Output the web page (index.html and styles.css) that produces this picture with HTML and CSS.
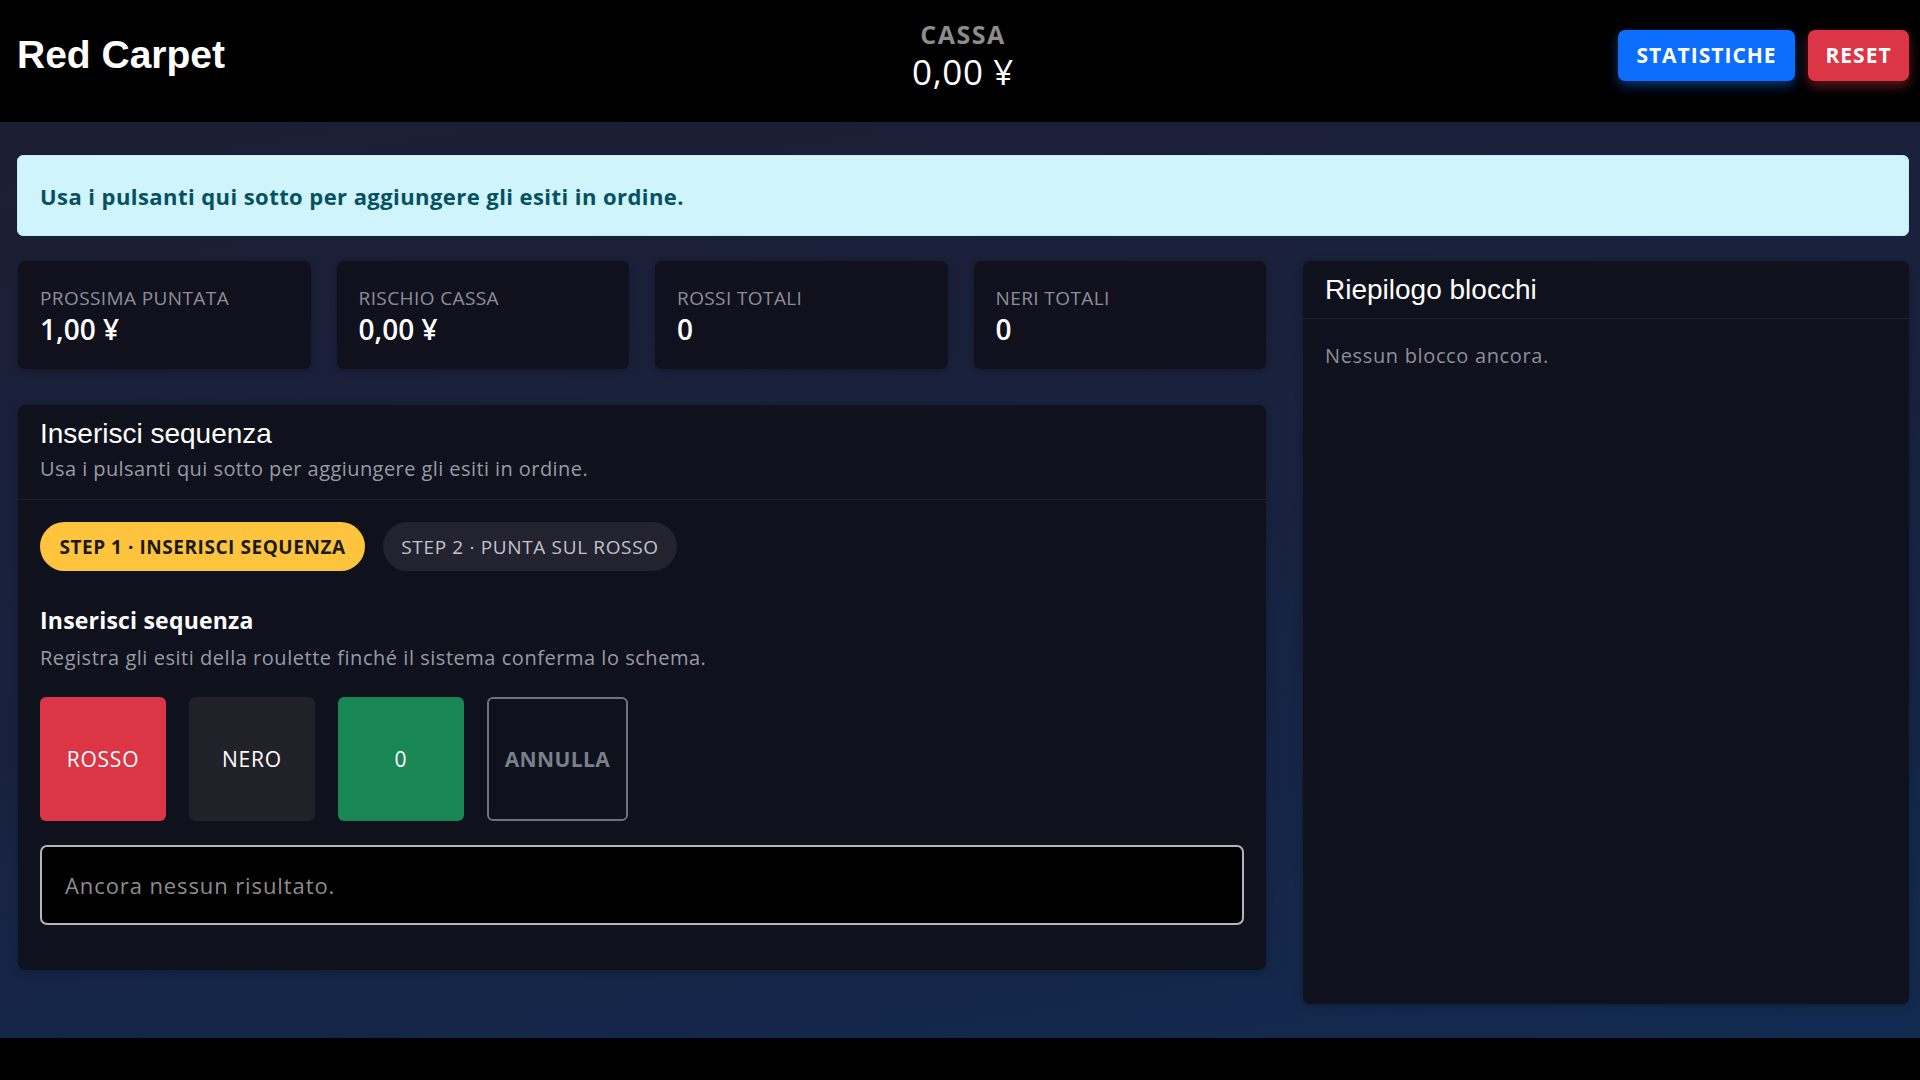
FILE: index.html
```html
<!DOCTYPE html>
<html lang="it">
<head>
<meta charset="utf-8">
<title>Red Carpet</title>
<link rel="stylesheet" href="styles.css">
</head>
<body>
<header class="topbar">
  <div class="brand">Red Carpet</div>
  <div class="cassa">
    <div class="cassa-label">CASSA</div>
    <div class="cassa-value">0,00 ¥</div>
  </div>
  <div class="actions">
    <button class="btn btn-blue">STATISTICHE</button>
    <button class="btn btn-red">RESET</button>
  </div>
</header>
<main class="main">
  <div class="alert">Usa i pulsanti qui sotto per aggiungere gli esiti in ordine.</div>
  <div class="layout">
    <div class="left">
      <div class="stats">
        <div class="stat"><div class="stat-label">PROSSIMA PUNTATA</div><div class="stat-value">1,00 ¥</div></div>
        <div class="stat"><div class="stat-label">RISCHIO CASSA</div><div class="stat-value">0,00 ¥</div></div>
        <div class="stat"><div class="stat-label">ROSSI TOTALI</div><div class="stat-value">0</div></div>
        <div class="stat"><div class="stat-label">NERI TOTALI</div><div class="stat-value">0</div></div>
      </div>
      <section class="panel">
        <div class="panel-head">
          <h2 class="panel-title">Inserisci sequenza</h2>
          <p class="panel-sub">Usa i pulsanti qui sotto per aggiungere gli esiti in ordine.</p>
        </div>
        <div class="panel-body">
          <div class="steps">
            <span class="pill pill-active">STEP 1 · INSERISCI SEQUENZA</span>
            <span class="pill pill-idle">STEP 2 · PUNTA SUL ROSSO</span>
          </div>
          <h3 class="sec-title">Inserisci sequenza</h3>
          <p class="sec-text">Registra gli esiti della roulette finché il sistema conferma lo schema.</p>
          <div class="choices">
            <button class="choice c-red">ROSSO</button>
            <button class="choice c-black">NERO</button>
            <button class="choice c-green">0</button>
            <button class="choice c-undo">ANNULLA</button>
          </div>
          <div class="results">Ancora nessun risultato.</div>
        </div>
      </section>
    </div>
    <aside class="summary">
      <div class="summary-head"><h2 class="panel-title">Riepilogo blocchi</h2></div>
      <div class="summary-body">Nessun blocco ancora.</div>
    </aside>
  </div>
</main>
</body>
</html>
```
FILE: styles.css
```css
* { box-sizing: border-box; }
html, body { margin: 0; padding: 0; }
body {
  background: #000;
  font-family: "Open Sans", "Noto Sans", sans-serif;
  color: #fff;
  width: 1920px;
  height: 1080px;
  overflow: hidden;
}
button { font-family: inherit; border: none; cursor: pointer; }
h2, h3, p { margin: 0; }

.topbar {
  height: 122px;
  background: #000;
  display: grid;
  grid-template-columns: 1fr auto 1fr;
  align-items: center;
  padding: 0 11px 12px 17px;
}
.brand {
  font-family: "Liberation Sans", Arial, sans-serif;
  font-weight: 700;
  font-size: 39px;
  color: #fff;
}
.cassa { text-align: center; padding-top: 2px; }
.cassa-label {
  font-weight: 700;
  font-size: 25px;
  letter-spacing: 1.5px;
  color: #8c8c8c;
  line-height: 28px;
}
.cassa-value {
  margin-top: 4px;
  font-size: 35px;
  letter-spacing: 0.6px;
  line-height: 40px;
  color: #fff;
}
.actions {
  display: flex;
  justify-content: flex-end;
  gap: 13px;
}
.btn {
  height: 51px;
  border-radius: 7px;
  color: #fff;
  font-weight: 700;
  font-size: 21px;
  letter-spacing: 1px;
  padding: 0;
}
.btn-blue { background: #0d6efd; width: 177px; box-shadow: 0 5px 12px rgba(13, 110, 253, 0.45); }
.btn-red { background: #dc3545; width: 101px; box-shadow: 0 5px 12px rgba(220, 53, 69, 0.45); }

.main {
  height: 916px;
  padding: 33px 11px 0 17px;
  background: linear-gradient(170deg, #1c1e33 0%, #182240 50%, #122a50 100%);
}
.alert {
  height: 81px;
  background: #cff4fc;
  border: 1px solid #b6effb;
  border-radius: 6px;
  color: #055160;
  font-weight: 700;
  font-size: 22px;
  letter-spacing: 0.43px;
  display: flex;
  align-items: center;
  padding: 0 22px;
}
.layout {
  display: flex;
  gap: 37px;
  margin-top: 25px;
  align-items: flex-start;
}
.left { width: 1249px; padding-left: 1px; }
.stats {
  display: grid;
  grid-template-columns: repeat(4, 1fr);
  gap: 26px;
}
.stat {
  height: 108px;
  background: #10111c;
  border-radius: 7px;
  padding: 26px 22px 0;
  box-shadow: 0 2px 6px rgba(0, 0, 0, 0.25);
}
.stat-label {
  font-size: 19px;
  letter-spacing: 0.4px;
  line-height: 22px;
  color: #8e8e9b;
}
.stat-value {
  margin-top: 3px;
  font-size: 28px;
  line-height: 34px;
  font-weight: 600;
  color: #fff;
}

.panel {
  margin-top: 36px;
  background: #0f111c;
  border-radius: 7px;
  height: 565px;
  box-shadow: 0 2px 8px rgba(0, 0, 0, 0.25);
}
.panel-head {
  padding: 12px 22px 16px;
  border-bottom: 1px solid #1f2230;
}
.panel-title {
  font-family: "Liberation Sans", Arial, sans-serif;
  font-weight: 400;
  font-size: 28px;
  line-height: 34px;
  color: #fff;
}
.panel-sub {
  margin-top: 4px;
  font-size: 20px;
  letter-spacing: 0.43px;
  line-height: 28px;
  color: #9a9aa6;
}
.panel-body { padding: 22px 22px 0; }
.steps { display: flex; gap: 18px; }
.pill {
  height: 49px;
  border-radius: 25px;
  display: inline-flex;
  align-items: center;
  justify-content: center;
  white-space: nowrap;
  font-size: 19px;
  padding: 0 10px;
}
.pill-active { background: #ffc43d; color: #1b1a17; font-weight: 700; letter-spacing: 0.55px; width: 325px; }
.pill-idle { background: #22232f; color: #c2c2cb; font-weight: 500; letter-spacing: 0.65px; width: 294px; }
.sec-title {
  margin-top: 35px;
  font-size: 23px;
  letter-spacing: 0.2px;
  font-weight: 700;
  line-height: 28px;
  color: #fff;
}
.sec-text {
  margin-top: 10px;
  font-size: 20px;
  letter-spacing: 0.53px;
  line-height: 28px;
  color: #9a9aa6;
}
.choices {
  display: flex;
  gap: 23px;
  margin-top: 25px;
}
.choice {
  width: 126px;
  height: 124px;
  border-radius: 6px;
  color: #fff;
  font-size: 21px;
  letter-spacing: 0.8px;
  font-weight: 500;
}
.c-red { background: #dc3545; }
.c-black { background: #212229; }
.c-green { background: #198754; }
.c-undo {
  width: 141px;
  background: transparent;
  border: 2px solid #6c7280;
  color: #7a7f8c;
  font-weight: 700;
  letter-spacing: 0.4px;
}
.results {
  margin-top: 24px;
  height: 80px;
  background: #000;
  border: 2px solid #b3b5ba;
  border-radius: 7px;
  display: flex;
  align-items: center;
  padding: 0 23px;
  font-size: 22px;
  letter-spacing: 0.9px;
  color: #8d8d8d;
}

.summary {
  flex: 1;
  height: 743px;
  background: #0f111c;
  border-radius: 7px;
  box-shadow: 0 2px 8px rgba(0, 0, 0, 0.25);
}
.summary-head {
  padding: 12px 22px 11px;
  border-bottom: 1px solid #1f2230;
}
.summary-body {
  padding: 23px 22px;
  font-size: 20px;
  letter-spacing: 0.65px;
  line-height: 27px;
  color: #8e8e9b;
}
```
